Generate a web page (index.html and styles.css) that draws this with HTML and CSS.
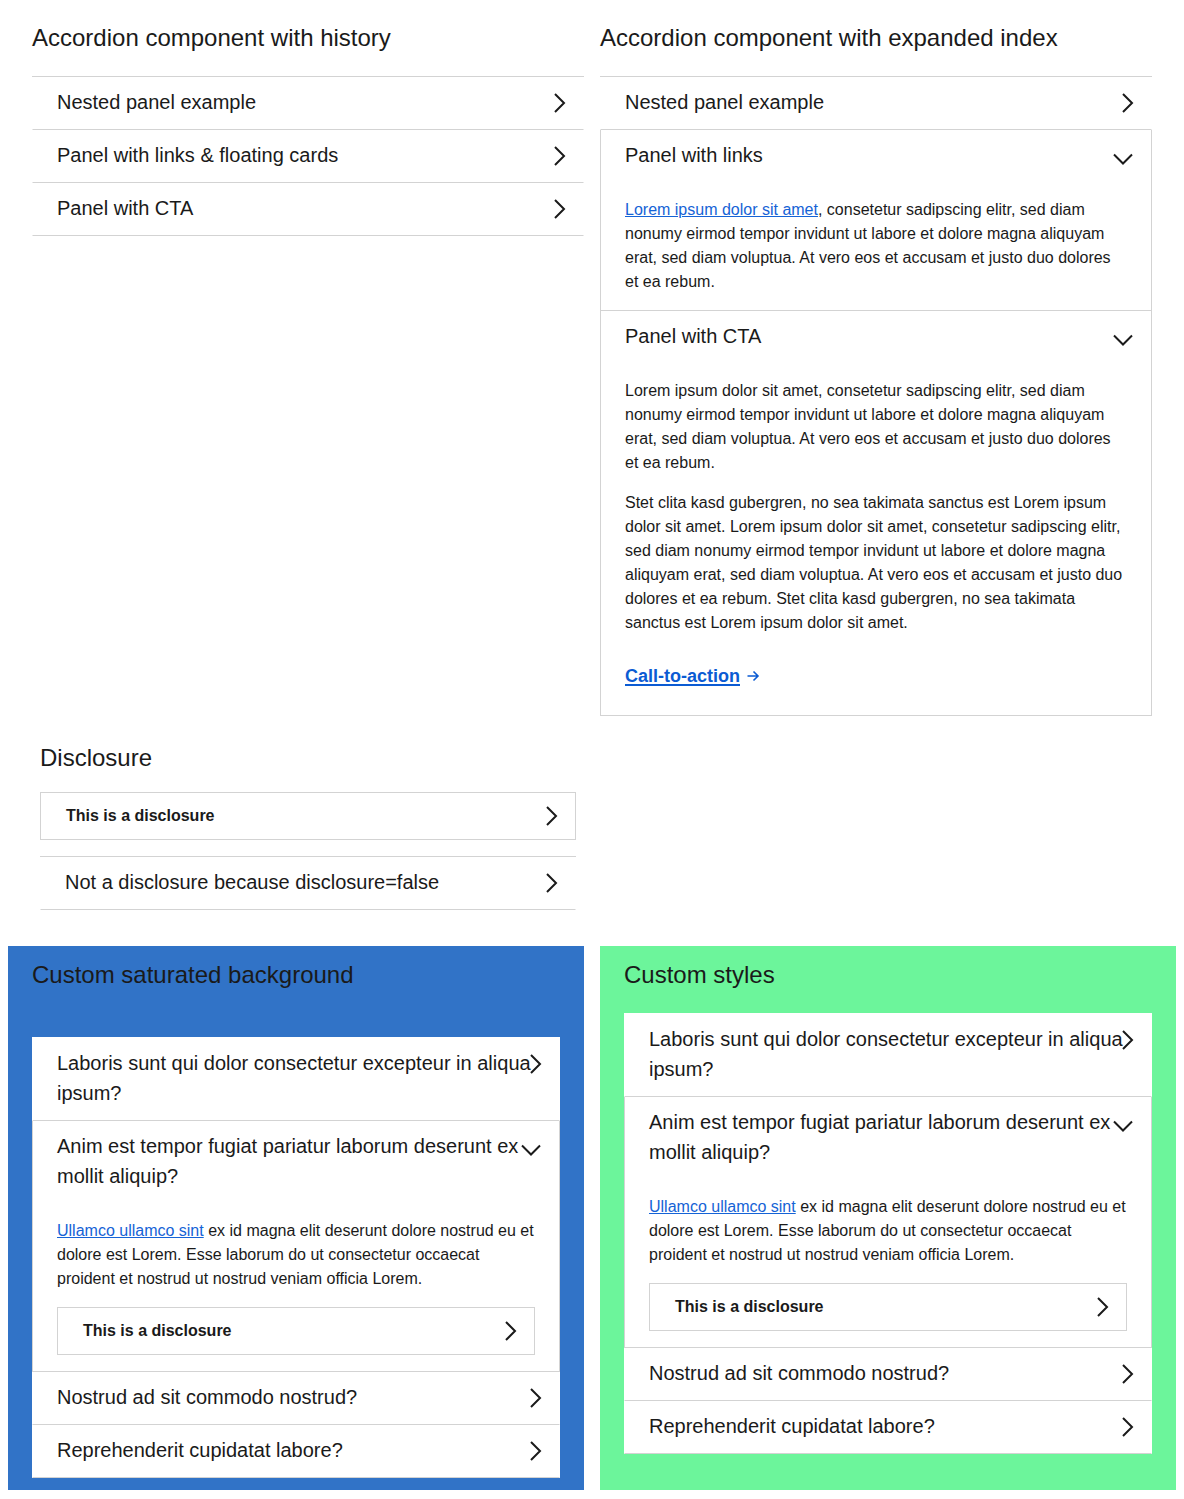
FILE: index.html
```html
<!DOCTYPE html>
<html lang="en">
<head>
<meta charset="utf-8">
<title>Accordion demos</title>
<link rel="stylesheet" href="styles.css">
</head>
<body>
<svg width="0" height="0" class="defs" aria-hidden="true">
  <defs>
    <path id="chev-r" d="M8 3 L17 12 L8 21"/>
    <path id="chev-d" d="M-1 10.5 L8 19.5 L17 10.5"/>
  </defs>
</svg>

<div class="demo-grid top">
  <section class="demo">
    <h2 class="demo-title">Accordion component with history</h2>
    <div class="accordion">
      <div class="acc-item">
        <div class="acc-header"><span class="acc-title">Nested panel example</span><svg class="chev" viewBox="0 0 24 24"><use href="#chev-r"/></svg></div>
      </div>
      <div class="acc-item">
        <div class="acc-header"><span class="acc-title">Panel with links &amp; floating cards</span><svg class="chev" viewBox="0 0 24 24"><use href="#chev-r"/></svg></div>
      </div>
      <div class="acc-item">
        <div class="acc-header"><span class="acc-title">Panel with CTA</span><svg class="chev" viewBox="0 0 24 24"><use href="#chev-r"/></svg></div>
      </div>
    </div>
  </section>

  <section class="demo">
    <h2 class="demo-title">Accordion component with expanded index</h2>
    <div class="accordion">
      <div class="acc-item">
        <div class="acc-header"><span class="acc-title">Nested panel example</span><svg class="chev" viewBox="0 0 24 24"><use href="#chev-r"/></svg></div>
      </div>
      <div class="acc-item open">
        <div class="acc-header"><span class="acc-title">Panel with links</span><svg class="chev" viewBox="0 0 24 24"><use href="#chev-d"/></svg></div>
        <div class="acc-body">
          <p><a class="link" href="#">Lorem ipsum dolor sit amet</a>, consetetur sadipscing elitr, sed diam nonumy eirmod tempor invidunt ut labore et dolore magna aliquyam erat, sed diam voluptua. At vero eos et accusam et justo duo dolores et ea rebum.</p>
        </div>
      </div>
      <div class="acc-item open">
        <div class="acc-header"><span class="acc-title">Panel with CTA</span><svg class="chev" viewBox="0 0 24 24"><use href="#chev-d"/></svg></div>
        <div class="acc-body">
          <p>Lorem ipsum dolor sit amet, consetetur sadipscing elitr, sed diam nonumy eirmod tempor invidunt ut labore et dolore magna aliquyam erat, sed diam voluptua. At vero eos et accusam et justo duo dolores et ea rebum.</p>
          <p>Stet clita kasd gubergren, no sea takimata sanctus est Lorem ipsum dolor sit amet. Lorem ipsum dolor sit amet, consetetur sadipscing elitr, sed diam nonumy eirmod tempor invidunt ut labore et dolore magna aliquyam erat, sed diam voluptua. At vero eos et accusam et justo duo dolores et ea rebum. Stet clita kasd gubergren, no sea takimata sanctus est Lorem ipsum dolor sit amet.</p>
          <div class="cta-wrap"><a class="cta" href="#">Call-to-action</a><svg class="cta-arrow" viewBox="0 0 14 14"><path d="M1.5 7 H12 M7.5 2.5 L12 7 L7.5 11.5"/></svg></div>
        </div>
      </div>
    </div>
  </section>
</div>

<section class="disclosure-demo">
  <h2 class="demo-title disc-title">Disclosure</h2>
  <div class="disclosure">
    <div class="disc-header"><span class="acc-title">This is a disclosure</span><svg class="chev disc-chev" viewBox="0 0 24 24"><use href="#chev-r"/></svg></div>
  </div>
  <div class="accordion after-disc">
    <div class="acc-item">
      <div class="acc-header"><span class="acc-title">Not a disclosure because disclosure=false</span><svg class="chev" viewBox="0 0 24 24"><use href="#chev-r"/></svg></div>
    </div>
  </div>
</section>

<div class="demo-grid colored">
  <section class="demo box blue">
    <h2 class="demo-title">Custom saturated background</h2>
    <div class="accordion plain spaced">
      <div class="acc-item">
        <div class="acc-header"><span class="acc-title">Laboris sunt qui dolor consectetur excepteur in aliqua ipsum?</span><svg class="chev" viewBox="0 0 24 24"><use href="#chev-r"/></svg></div>
      </div>
      <div class="acc-item open">
        <div class="acc-header"><span class="acc-title">Anim est tempor fugiat pariatur laborum deserunt ex mollit aliquip?</span><svg class="chev" viewBox="0 0 24 24"><use href="#chev-d"/></svg></div>
        <div class="acc-body">
          <p><a class="link" href="#">Ullamco ullamco sint</a> ex id magna elit deserunt dolore nostrud eu et dolore est Lorem. Esse laborum do ut consectetur occaecat proident et nostrud ut nostrud veniam officia Lorem.</p>
          <div class="disclosure nested">
            <div class="disc-header"><span class="acc-title">This is a disclosure</span><svg class="chev disc-chev" viewBox="0 0 24 24"><use href="#chev-r"/></svg></div>
          </div>
        </div>
      </div>
      <div class="acc-item">
        <div class="acc-header"><span class="acc-title">Nostrud ad sit commodo nostrud?</span><svg class="chev" viewBox="0 0 24 24"><use href="#chev-r"/></svg></div>
      </div>
      <div class="acc-item">
        <div class="acc-header"><span class="acc-title">Reprehenderit cupidatat labore?</span><svg class="chev" viewBox="0 0 24 24"><use href="#chev-r"/></svg></div>
      </div>
    </div>
  </section>

  <section class="demo box green">
    <h2 class="demo-title">Custom styles</h2>
    <div class="accordion plain">
      <div class="acc-item">
        <div class="acc-header"><span class="acc-title">Laboris sunt qui dolor consectetur excepteur in aliqua ipsum?</span><svg class="chev" viewBox="0 0 24 24"><use href="#chev-r"/></svg></div>
      </div>
      <div class="acc-item open">
        <div class="acc-header"><span class="acc-title">Anim est tempor fugiat pariatur laborum deserunt ex mollit aliquip?</span><svg class="chev" viewBox="0 0 24 24"><use href="#chev-d"/></svg></div>
        <div class="acc-body">
          <p><a class="link" href="#">Ullamco ullamco sint</a> ex id magna elit deserunt dolore nostrud eu et dolore est Lorem. Esse laborum do ut consectetur occaecat proident et nostrud ut nostrud veniam officia Lorem.</p>
          <div class="disclosure nested">
            <div class="disc-header"><span class="acc-title">This is a disclosure</span><svg class="chev disc-chev" viewBox="0 0 24 24"><use href="#chev-r"/></svg></div>
          </div>
        </div>
      </div>
      <div class="acc-item">
        <div class="acc-header"><span class="acc-title">Nostrud ad sit commodo nostrud?</span><svg class="chev" viewBox="0 0 24 24"><use href="#chev-r"/></svg></div>
      </div>
      <div class="acc-item">
        <div class="acc-header"><span class="acc-title">Reprehenderit cupidatat labore?</span><svg class="chev" viewBox="0 0 24 24"><use href="#chev-r"/></svg></div>
      </div>
    </div>
  </section>
</div>
</body>
</html>
```

FILE: styles.css
```css
* { box-sizing: border-box; }

body {
  margin: 8px;
  font-family: "Liberation Sans", Arial, sans-serif;
  color: #1a1a1a;
  background: #fff;
}

.defs { position: absolute; width: 0; height: 0; overflow: hidden; }

.demo-grid {
  display: grid;
  grid-template-columns: 1fr 1fr;
  column-gap: 16px;
  align-items: start;
}

.demo-grid.top { padding: 16px 24px 24px; }

.demo-grid.colored { align-items: stretch; }

.demo-title {
  margin: 0 0 24px;
  font-size: 24px;
  font-weight: 400;
  line-height: 28px;
}

.accordion { border-top: 1px solid #d3d3d3; }

.acc-item {
  border-bottom: 1px solid #d3d3d3;
  border-left: 1px solid transparent;
  border-right: 1px solid transparent;
}

.acc-item.open {
  border-left-color: #d3d3d3;
  border-right-color: #d3d3d3;
}

.acc-header {
  display: flex;
  align-items: flex-start;
  padding: 10px 12px 12px 24px;
  font-size: 20px;
  line-height: 30px;
}

.acc-title { flex: 1; min-width: 0; }

.acc-header .acc-title { margin-right: -16px; }

.chev {
  position: relative;
  flex: none;
  width: 24px;
  height: 24px;
  margin-top: 4px;
  overflow: visible;
  fill: none;
  stroke: #1a1a1a;
  stroke-width: 2;
}

.acc-body {
  padding: 16px 24px 16px;
  font-size: 16px;
  line-height: 24px;
}

.acc-body p { margin: 0 0 16px; }
.acc-body p:last-child { margin-bottom: 0; }

.link {
  color: #1563d6;
  text-decoration: underline;
}

.cta-wrap {
  display: flex;
  align-items: center;
  margin: 29px 0 11px;
  line-height: 24px;
}

.cta {
  color: #0b5bd3;
  font-size: 18px;
  font-weight: 700;
  text-decoration: underline;
  text-decoration-thickness: 2px;
  text-underline-offset: 2px;
}

.cta-arrow {
  width: 14px;
  height: 14px;
  margin-left: 6px;
  fill: none;
  stroke: #0b5bd3;
  stroke-width: 1.6;
}

.disclosure-demo {
  max-width: 576px;
  padding: 4px 8px 36px 32px;
}

.disc-title { margin-bottom: 20px; }

.disclosure { border: 1px solid #d3d3d3; background: #fff; }

.disc-header {
  display: flex;
  align-items: flex-start;
  padding: 11px 12px 11px 25px;
  font-size: 16px;
  font-weight: 700;
  line-height: 24px;
}

.disc-chev { margin-top: 0; }

.accordion.after-disc { margin-top: 16px; }

.disclosure.nested { margin-top: 16px; }

.box { padding: 15px 24px 12px; }
.box .demo-title { margin-bottom: 24px; }

.blue { background: #3173c7; }
.green { background: #6cf59b; }

.accordion.plain {
  background: #fff;
  border-top-color: #fff;
}

.accordion.spaced { margin-top: 48px; }
```
